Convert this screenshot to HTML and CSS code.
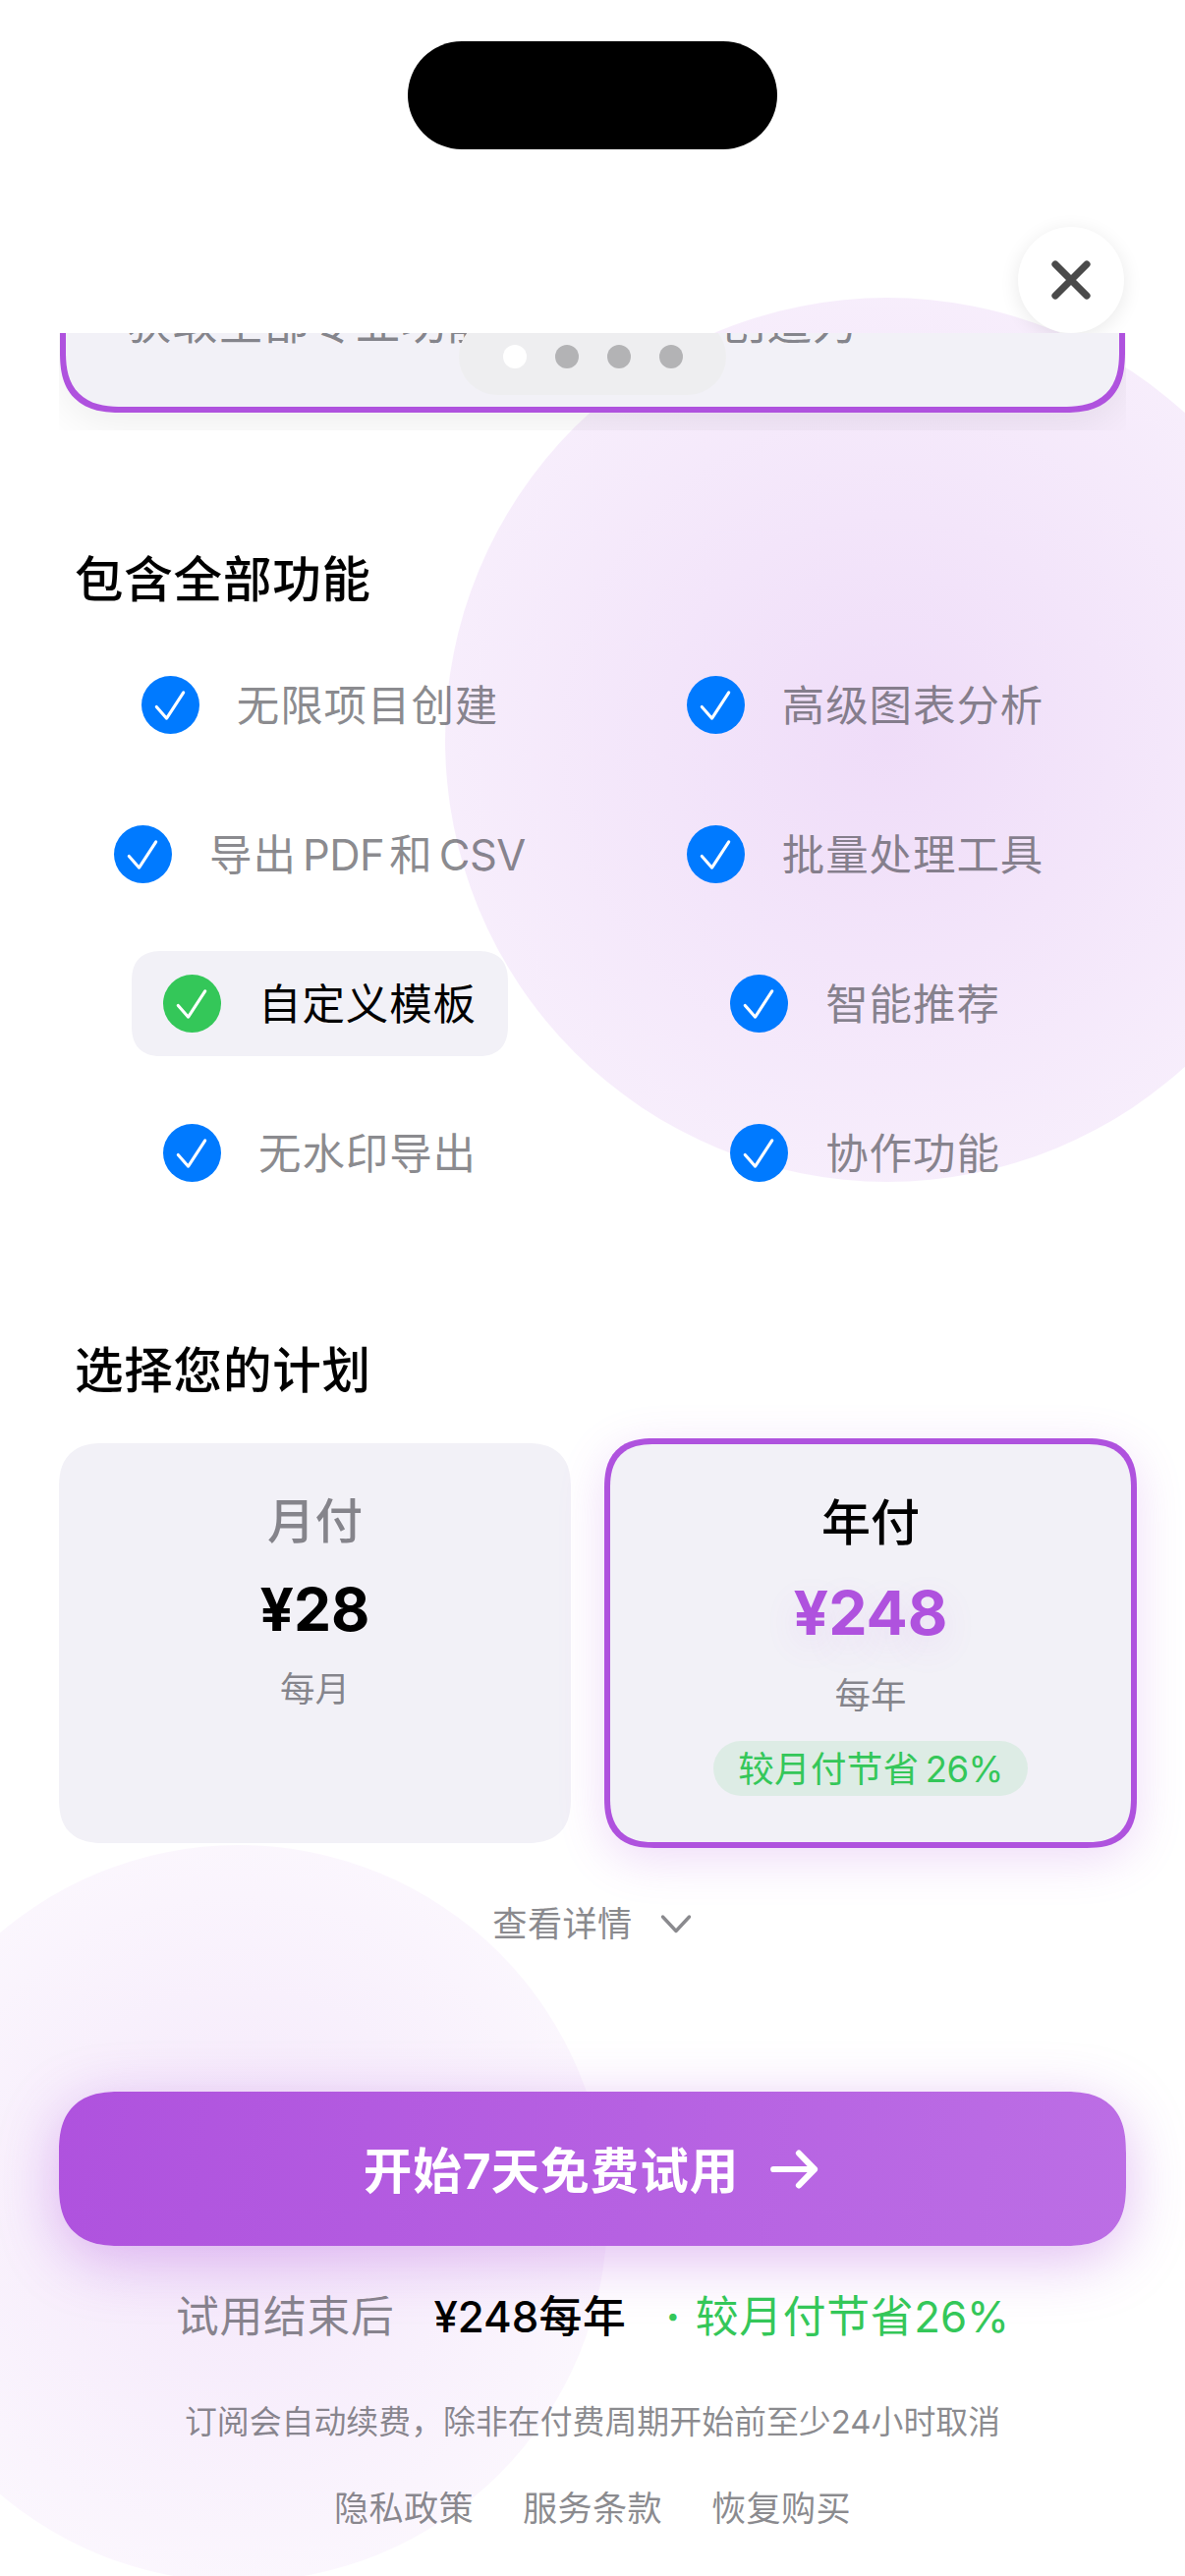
FILE: index.html
```html
<!DOCTYPE html>
<html lang="zh-CN">
<head>
<meta charset="utf-8">
<title>订阅</title>
<link rel="stylesheet" href="styles.css">
</head>
<body>
<svg class="defs" width="0" height="0" aria-hidden="true">
  <symbol id="check" viewBox="0 0 59 59"><path d="M15.3 31.4 L25.6 43.2 L42.7 16.8" fill="none" stroke="#fff" stroke-width="3.1" stroke-linecap="round" stroke-linejoin="round"/></symbol>
</svg>
<div class="screen">
  <div class="orb orb-top"></div>
  <div class="orb orb-bottom"></div>

  <header class="header">
    <div class="island"></div>
    <button class="close" aria-label="关闭">
      <svg width="42" height="42" viewBox="0 0 42 42"><path d="M5 5 L37 37 M37 5 L5 37" stroke="#4a4a4a" stroke-width="7.2" stroke-linecap="round"/></svg>
    </button>
  </header>

  <main class="content">
    <section class="carousel">
      <div class="slide"><p class="slide-text">获取全部专业功能，释放您的创造力</p></div>
      <div class="pager"><i class="dot active"></i><i class="dot"></i><i class="dot"></i><i class="dot"></i></div>
    </section>

    <h2 class="title">包含全部功能</h2>
    <ul class="features">
      <li class="feature"><svg class="mark"><use href="#check"/></svg><span>无限项目创建</span></li>
      <li class="feature"><svg class="mark"><use href="#check"/></svg><span>高级图表分析</span></li>
      <li class="feature"><svg class="mark"><use href="#check"/></svg><span>导出<b class="latin">PDF</b>和<b class="latin last">CSV</b></span></li>
      <li class="feature"><svg class="mark"><use href="#check"/></svg><span>批量处理工具</span></li>
      <li class="feature current"><svg class="mark"><use href="#check"/></svg><span>自定义模板</span></li>
      <li class="feature"><svg class="mark"><use href="#check"/></svg><span>智能推荐</span></li>
      <li class="feature"><svg class="mark"><use href="#check"/></svg><span>无水印导出</span></li>
      <li class="feature"><svg class="mark"><use href="#check"/></svg><span>协作功能</span></li>
    </ul>

    <h2 class="title plans-title">选择您的计划</h2>
    <div class="plans">
      <div class="plan">
        <div class="plan-name">月付</div>
        <div class="price">¥28</div>
        <div class="period">每月</div>
      </div>
      <div class="plan selected">
        <div class="plan-name">年付</div>
        <div class="price">¥248</div>
        <div class="period">每年</div>
        <div class="badge">较月付节省<b class="latin last">26%</b></div>
      </div>
    </div>

    <div class="details">
      <span>查看详情</span>
      <svg width="34" height="22" viewBox="0 0 34 22"><path d="M3.5 4 L17 18.5 L30.5 4" fill="none" stroke="#8a8a8e" stroke-width="3.4" stroke-linecap="round" stroke-linejoin="round"/></svg>
    </div>

    <button class="cta">
      <span>开始<b class="num">7</b>天免费试用</span>
      <svg width="50" height="42" viewBox="0 0 50 42"><path d="M4.2 21 H46 M30 4.6 L46 21 L30 37.4" fill="none" stroke="#fff" stroke-width="6.2" stroke-linecap="round" stroke-linejoin="round"/></svg>
    </button>

    <div class="summary">
      <span class="after">试用结束后</span>
      <span class="amount"><b class="num">¥248</b>每年</span>
      <span class="saving"><i class="sep">·</i>较月付节省<b class="num">26%</b></span>
    </div>
    <p class="terms">订阅会自动续费，除非在付费周期开始前至少24小时取消</p>
    <nav class="links"><a>隐私政策</a><a>服务条款</a><a>恢复购买</a></nav>
  </main>
</div>
</body>
</html>
```
FILE: styles.css
```css
* { box-sizing: border-box; margin: 0; padding: 0; }

body {
  background: #fff;
  color: #000;
  font-family: Inter, "Noto Sans CJK SC", sans-serif;
}

button { border: 0; font: inherit; }
i, b { font-style: normal; font-weight: inherit; }
.defs { position: absolute; }

.screen {
  position: relative;
  width: 1206px;
  height: 2622px;
  overflow: hidden;
  isolation: isolate;
}

/* Decorative background circles */
.orb { position: absolute; z-index: -1; border-radius: 50%; }
.orb-top {
  left: 453px; top: 303px; width: 900px; height: 900px;
  background: radial-gradient(closest-side, rgba(175, 82, 222, .2), rgba(175, 82, 222, .1));
}
.orb-bottom {
  left: -132px; top: 1878px; width: 750px; height: 750px;
  background: radial-gradient(closest-side, rgba(175, 82, 222, .14), rgba(175, 82, 222, .05));
}

.header {
  height: 339px;
  padding: 42px 62px 0;
  display: flex;
  flex-direction: column;
}
.island {
  width: 376px;
  height: 110px;
  border-radius: 55px;
  background: #000;
  align-self: center;
}
.close {
  width: 108px;
  height: 108px;
  margin-top: 79px;
  align-self: flex-end;
  display: grid;
  place-items: center;
  border-radius: 50%;
  background: #fff;
  box-shadow: 0 4px 20px rgba(0, 0, 0, .09);
}

.content { padding: 0 60px; }

/* Carousel, scrolled so that only its lower edge shows */
.carousel {
  position: relative;
  height: 99px;
  overflow: hidden;
  display: flex;
  flex-direction: column;
  justify-content: flex-end;
  padding: 0 1px 18px;
}
.slide {
  flex: none;
  height: 300px;
  padding: 0 62px 58px;
  display: flex;
  align-items: flex-end;
  border: 6px solid #af52de;
  border-radius: 50px;
  background: #f2f1f7;
  box-shadow: 0 12px 44px rgba(0, 0, 0, .07);
}
.slide-text {
  font-size: 46px;
  line-height: 56px;
  letter-spacing: .5px;
  white-space: nowrap;
  color: rgba(60, 60, 67, .6);
}
.pager {
  position: absolute;
  left: 407px;
  bottom: 36px;
  width: 272px;
  height: 78px;
  display: flex;
  align-items: center;
  justify-content: center;
  gap: 29px;
  border-radius: 39px;
  background: #eeeef0;
}
.dot { width: 24px; height: 24px; border-radius: 50%; background: #b3b3b5; }
.dot.active { background: #fff; }

.title {
  margin-top: 122px;
  padding-left: 16px;
  font-size: 49.5px;
  font-weight: 500;
  line-height: 60px;
  letter-spacing: .8px;
}
.plans-title { margin-top: 138px; }

.features {
  margin-top: 44px;
  display: grid;
  grid-template-columns: 1fr 1fr;
  gap: 45px 24px;
  justify-items: center;
  list-style: none;
}
.feature {
  height: 107px;
  padding: 0 32px;
  display: flex;
  align-items: center;
  gap: 38px;
  border-radius: 26px;
  font-size: 43.5px;
  line-height: 54px;
  letter-spacing: .9px;
  color: rgba(60, 60, 67, .6);
}
.feature span { padding-top: 1px; }
.mark { width: 59px; height: 59px; border-radius: 50%; background: #007aff; }
.current { background: #f2f1f7; color: #000; }
.current .mark { background: #34c759; }
.latin { margin: 0 5px 0 6px; letter-spacing: -.5px; }
.latin.last { margin-right: 0; }
.num { letter-spacing: 0; }

.plans {
  margin-top: 44px;
  height: 407px;
  display: grid;
  grid-template-columns: 1fr 1fr;
  gap: 44px;
}
.plan {
  padding-top: 51px;
  display: flex;
  flex-direction: column;
  align-items: center;
  border-radius: 38px;
  background: #f2f1f7;
}
.plan-name {
  font-size: 48.5px;
  font-weight: 500;
  line-height: 58px;
  letter-spacing: 0;
  color: rgba(60, 60, 67, .6);
}
.price { margin-top: 24px; font-size: 60.5px; font-weight: 700; line-height: 72px; }
.period {
  margin-top: 24px;
  font-size: 35.5px;
  line-height: 44px;
  color: rgba(60, 60, 67, .6);
}
.selected {
  margin: -5px -11px -5px -10px;
  border: 6px solid #af52de;
  border-radius: 42px;
  box-shadow: 0 12px 48px rgba(175, 82, 222, .2);
}
.selected .plan-name { font-size: 50px; color: #000; }
.selected .price {
  margin-top: 26px;
  font-size: 62.5px;
  color: #af52de;
  text-shadow: 0 12px 36px rgba(175, 82, 222, .12);
}
.selected .period { margin-top: 27px; font-size: 36.5px; }
.badge {
  width: 320px;
  height: 56px;
  margin-top: 24px;
  padding-top: 1px;
  border-radius: 28px;
  background: rgba(52, 199, 89, .11);
  color: #34c759;
  font-size: 36.5px;
  line-height: 56px;
  letter-spacing: .4px;
  text-align: center;
}

.details {
  margin-top: 60px;
  display: flex;
  align-items: center;
  justify-content: center;
  gap: 27px;
  font-size: 35.2px;
  line-height: 44px;
  letter-spacing: .4px;
  color: #8a8a8e;
}

.cta {
  width: 100%;
  height: 157px;
  margin-top: 149px;
  padding: 0 3px 2px 0;
  display: flex;
  align-items: center;
  justify-content: center;
  gap: 31px;
  border-radius: 50px;
  background: linear-gradient(100deg, #af52de, #bc6ee5);
  box-shadow: 0 14px 60px rgba(175, 82, 222, .38);
  color: #fff;
  font-size: 49.5px;
  font-weight: 700;
  letter-spacing: 1px;
}
.cta svg { margin-top: 2px; }

.summary {
  margin-top: 48px;
  display: flex;
  justify-content: center;
  gap: 40px;
  font-size: 43.8px;
  line-height: 50px;
  letter-spacing: .7px;
}
.after { color: rgba(60, 60, 67, .6); }
.amount { font-weight: 500; }
.amount .num { font-weight: 450; }
.saving { color: #34c759; }
.sep { margin-right: 15px; font-weight: 700; }

.terms {
  margin-top: 61px;
  font-size: 32.9px;
  line-height: 40px;
  text-align: center;
  color: rgba(60, 60, 67, .6);
}
.links {
  margin-top: 46px;
  display: flex;
  justify-content: center;
  gap: 50px;
  font-size: 35.2px;
  line-height: 44px;
  letter-spacing: .3px;
  color: rgba(60, 60, 67, .6);
}

/* Continuous corners where the browser can draw them */
@supports (corner-shape: superellipse(1.3)) {
  .slide, .plan, .feature, .cta { corner-shape: superellipse(1.35); }
  .slide { border-radius: 62px; }
  .plan { border-radius: 46px; }
  .selected { border-radius: 51px; }
  .feature { border-radius: 32px; }
  .cta { border-radius: 62px; }
}
```
